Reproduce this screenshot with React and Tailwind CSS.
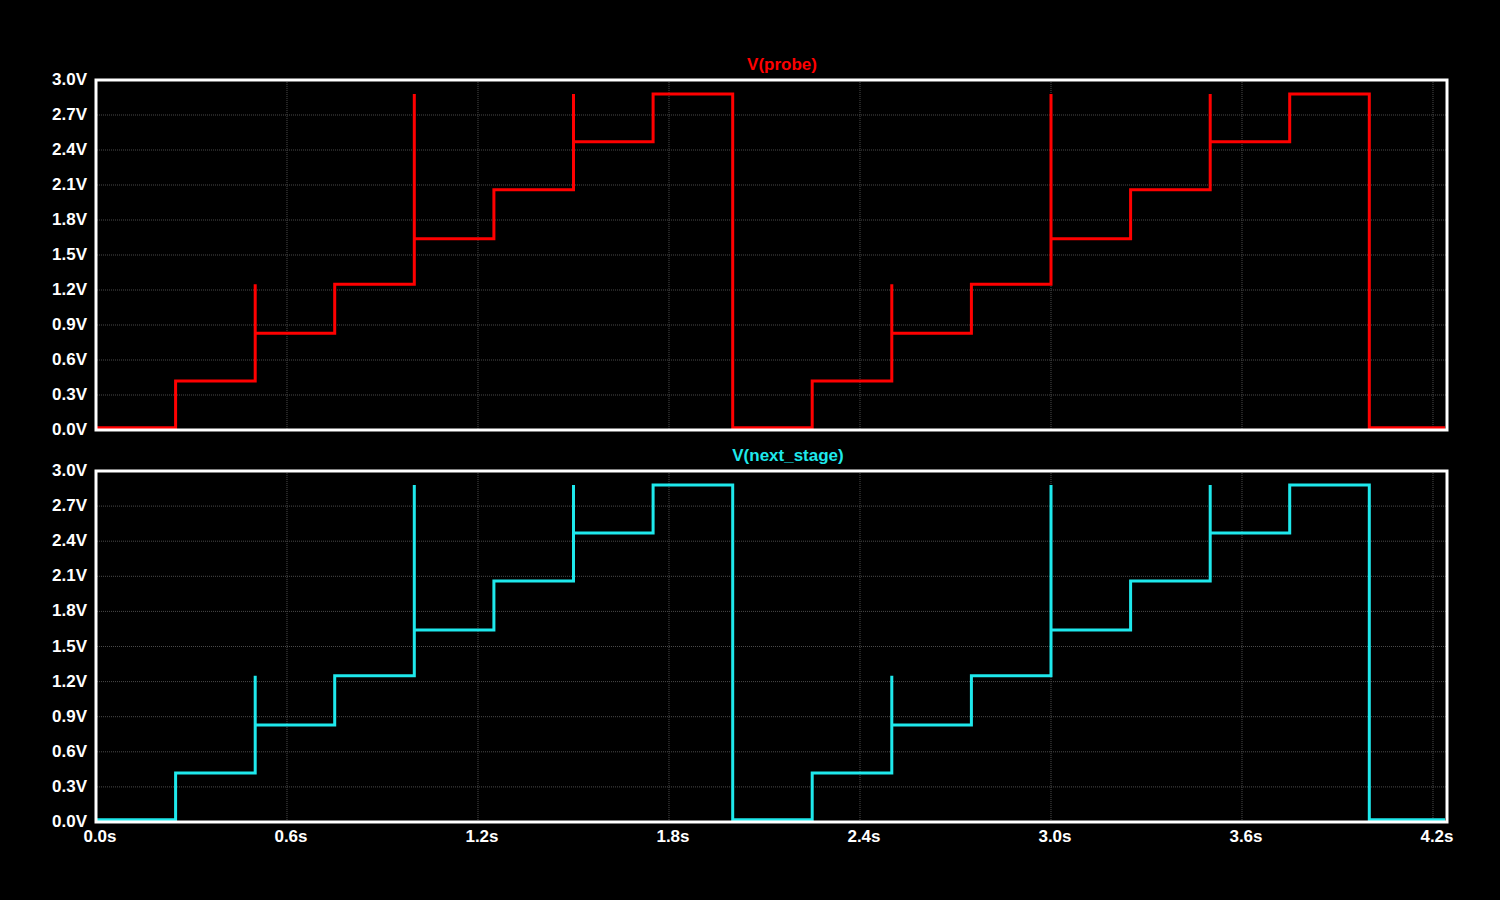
import React from "react";

const X0 = 96, PXS = 318.33;
const tx = (t) => X0 + t * PXS;
const lvls = [
  [0, 0.02], [0.25, 0.42], [0.5, 1.25, 0.83], [0.75, 1.25], [1.0, 2.88, 1.64], [1.25, 2.06],
  [1.5, 2.88, 2.47], [1.75, 2.88], [2.0, 0.02],
];
function buildPath(top, bottom) {
  const vy = (v) => (bottom - (v / 3) * (bottom - top)).toFixed(1);
  const seq = [];
  for (const base of [0, 2]) for (const l of lvls) {
    if (base === 2 && l[0] === 0) continue;
    seq.push([l[0] + base, l[1], l[2]]);
  }
  let d = "";
  let prev = null;
  for (const [t, a, b] of seq) {
    const x = tx(t).toFixed(1);
    if (prev === null) { d += `M${x},${vy(a)}`; }
    else {
      d += ` L${x},${vy(prev)} L${x},${vy(a)}`;
      if (b !== undefined) d += ` L${x},${vy(b)}`;
    }
    prev = b !== undefined ? b : a;
  }
  d += ` L1445,${vy(prev)}`;
  return d;
}

function Panel({ top, bottom, title, color, titleX, showX }) {
  const ys = Array.from({ length: 11 }, (_, i) => i);
  const xs = [0.6, 1.2, 1.8, 2.4, 3.0, 3.6, 4.2];
  const h = bottom - top;
  const font = "Liberation Sans, Arial, sans-serif";
  return (
    <g>
      <text x={titleX} y={top - 10} fill={color} fontSize="17" fontWeight="700" textAnchor="middle" fontFamily={font}>{title}</text>
      {ys.slice(1, 10).map((i) => (
        <line key={i} x1="97" x2="1446" y1={top + (h * i) / 10} y2={top + (h * i) / 10} stroke="#4a4a4a" strokeWidth="1" strokeDasharray="1 1" />
      ))}
      {xs.map((t) => (
        <line key={t} x1={tx(t)} x2={tx(t)} y1={top} y2={bottom} stroke="#4a4a4a" strokeWidth="1" strokeDasharray="1 1" />
      ))}
      {ys.map((i) => (
        <text key={i} x="87" y={bottom - (h * i) / 10 + 5} fill="#fff" fontSize="17" fontWeight="700" textAnchor="end" fontFamily={font}>{(i * 0.3).toFixed(1)}V</text>
      ))}
      <path d={buildPath(top, bottom)} fill="none" stroke={color} strokeWidth="3" strokeLinejoin="miter" />
      <rect x="96" y={top} width="1351" height={h} fill="none" stroke="#fff" strokeWidth="3" />
      {showX && [0, ...xs].map((t) => (
        <text key={t} x={tx(t) + 4} y={bottom + 20} fill="#fff" fontSize="17" fontWeight="700" textAnchor="middle" fontFamily={font}>{t.toFixed(1)}s</text>
      ))}
    </g>
  );
}

export default function App() {
  return (
    <div className="w-[1500px] h-[900px] bg-black overflow-hidden">
      <svg width="1500" height="900" viewBox="0 0 1500 900">
        <Panel top={80} bottom={430} title="V(probe)" color="#ff0000" titleX={782} />
        <Panel top={471} bottom={822} title="V(next_stage)" color="#1ee8ec" titleX={788} showX />
      </svg>
    </div>
  );
}
